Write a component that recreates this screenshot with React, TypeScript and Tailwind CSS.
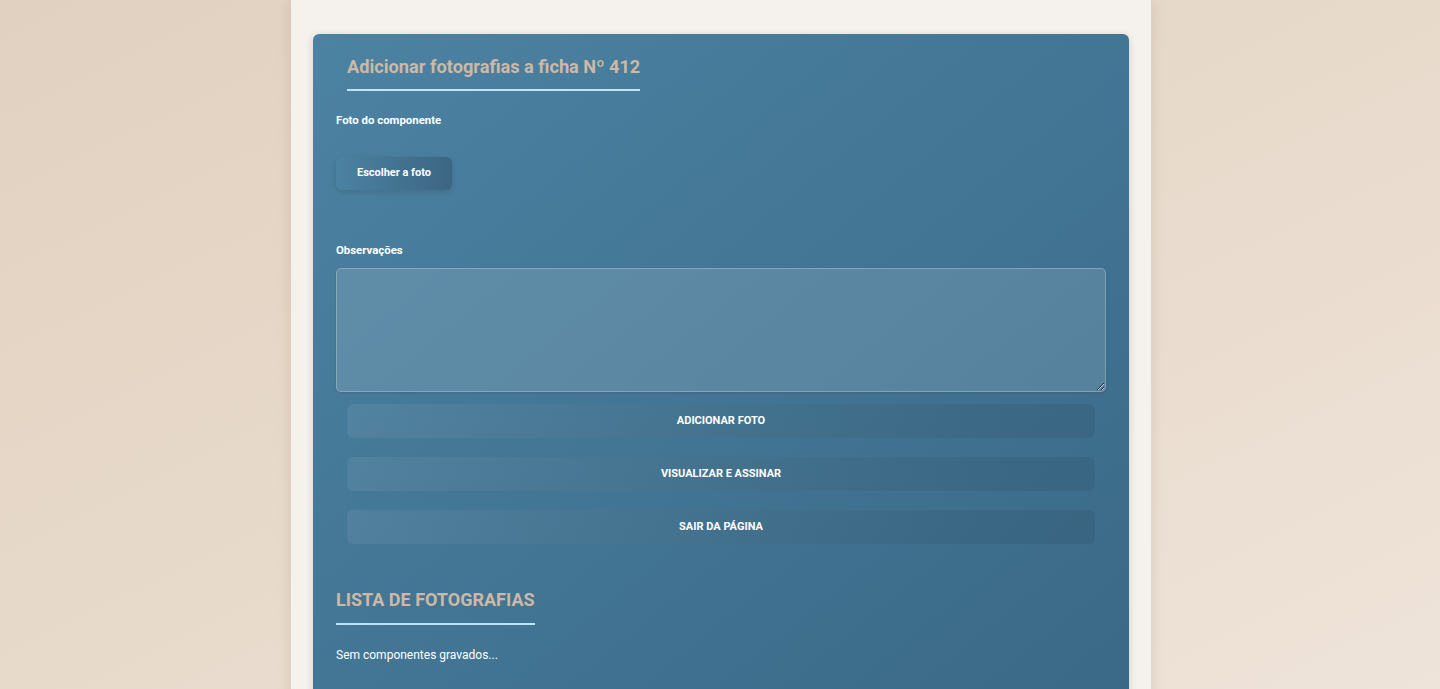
import React from 'react';

const actions = ['Adicionar foto', 'Visualizar e assinar', 'Sair da página'];

export default function App() {
  return (
    <div
      className="min-h-screen bg-gradient-to-br from-[#e1d1c0] via-[#e8dacb] to-[#efe4da] flex justify-center"
      style={{ fontFamily: 'Roboto, "Liberation Sans", sans-serif' }}
    >
      <div className="w-[860px] ml-[2px] bg-[#f5f2ee] rounded-b-md shadow-[0_0_14px_rgba(120,100,80,0.18)] px-[22px] pt-[34px]">
        <div className="rounded-md bg-gradient-to-br from-[#4c82a2] to-[#3a6987] px-[23px] pt-[21px] pb-10 shadow-[0_2px_8px_rgba(0,0,0,0.15)]">
          <div className="px-[11px]">
            <h2 className="inline-block text-[18.2px] leading-6 font-bold text-[#cdb9a5] pb-[10px] border-b-2 border-[#bfe3f7]">
              Adicionar fotografias a ficha Nº 412
            </h2>
          </div>

          <label className="block mt-[21px] text-[11.4px] leading-4 font-bold text-white">
            Foto do componente
          </label>
          <button className="mt-[29px] h-[33px] w-[116px] rounded-md bg-gradient-to-r from-[#4c82a2] to-[#3b6683] shadow-[0_2px_6px_rgba(0,0,0,0.12)] text-[11px] font-bold text-white">
            Escolher a foto
          </button>

          <label className="block mt-[52px] text-[11.4px] leading-4 font-bold text-white">
            Observações
          </label>
          <textarea className="block mt-[10px] w-full h-[124px] rounded-[5px] bg-white/[0.13] border border-white/25 shadow-[0_1px_3px_rgba(0,0,0,0.12)] outline-none" />

          <div className="px-[11px] mt-[12px] flex flex-col gap-[19px]">
            {actions.map((a) => (
              <button
                key={a}
                className="h-[34px] w-full rounded-md bg-gradient-to-r from-white/[0.06] to-black/[0.07] text-[11px] font-bold uppercase text-white"
              >
                {a}
              </button>
            ))}
          </div>

          <h2 className="inline-block mt-[44px] text-[18px] leading-6 font-bold text-[#cdb9a5] pb-[11px] border-b-2 border-[#bfe3f7]">
            LISTA DE FOTOGRAFIAS
          </h2>
          <p className="mt-[22px] text-[12px] leading-4 text-white">Sem componentes gravados...</p>
        </div>
      </div>
    </div>
  );
}
